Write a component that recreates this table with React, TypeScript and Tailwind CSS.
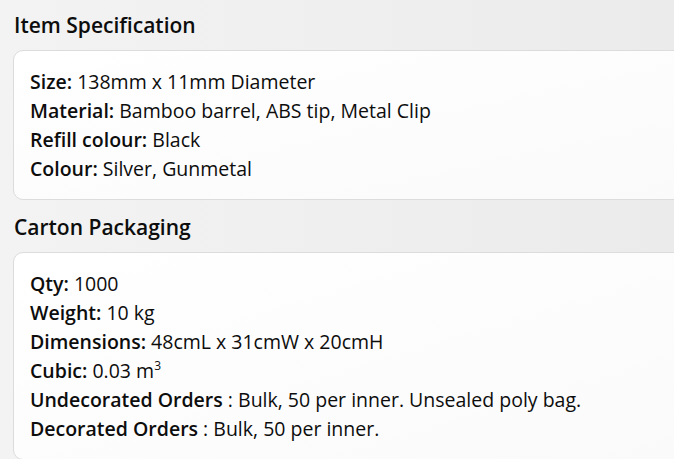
import React from "react";

const Row = ({ label, value, spaced }: { label: string; value: React.ReactNode; spaced?: boolean }) => (
  <div className="whitespace-nowrap">
    {spaced ? (
      <>
        <span className="font-semibold">{label}</span> : {value}
      </>
    ) : (
      <>
        <span className="font-semibold">{label}:</span> {value}
      </>
    )}
  </div>
);

export default function App() {
  return (
    <div
      className="w-[674px] h-[459px] overflow-hidden bg-gradient-to-r from-[#f3f3f3] to-[#ebebeb] text-[#0d0d0d] pl-[13px]"
      style={{ fontFamily: '"Open Sans", sans-serif' }}
    >
      <h2 className="pt-[10px] pb-[10px] pl-px text-[21px] leading-[30px] font-semibold">Item Specification</h2>
      <div className="w-[700px] rounded-[10px] border border-[#dcdcdc] bg-gradient-to-br from-white to-[#fafafa] px-4 py-4 text-[19.5px] leading-[29px]">
        <Row label="Size" value="138mm x 11mm Diameter" />
        <Row label="Material" value="Bamboo barrel, ABS tip, Metal Clip" />
        <Row label="Refill colour" value="Black" />
        <Row label="Colour" value="Silver, Gunmetal" />
      </div>
      <h2 className="pt-[12px] pb-[10px] pl-px text-[21px] leading-[30px] font-semibold">Carton Packaging</h2>
      <div className="w-[700px] rounded-[10px] border border-[#dcdcdc] bg-gradient-to-br from-white to-[#fafafa] px-4 py-4 text-[19.5px] leading-[29px]">
        <Row label="Qty" value="1000" />
        <Row label="Weight" value="10 kg" />
        <Row label="Dimensions" value="48cmL x 31cmW x 20cmH" />
        <Row
          label="Cubic"
          value={
            <>
              0.03 m<sup className="text-[12px] leading-none relative -top-[8px]">3</sup>
            </>
          }
        />
        <Row label="Undecorated Orders" spaced value="Bulk, 50 per inner. Unsealed poly bag." />
        <Row label="Decorated Orders" spaced value="Bulk, 50 per inner." />
      </div>
    </div>
  );
}
